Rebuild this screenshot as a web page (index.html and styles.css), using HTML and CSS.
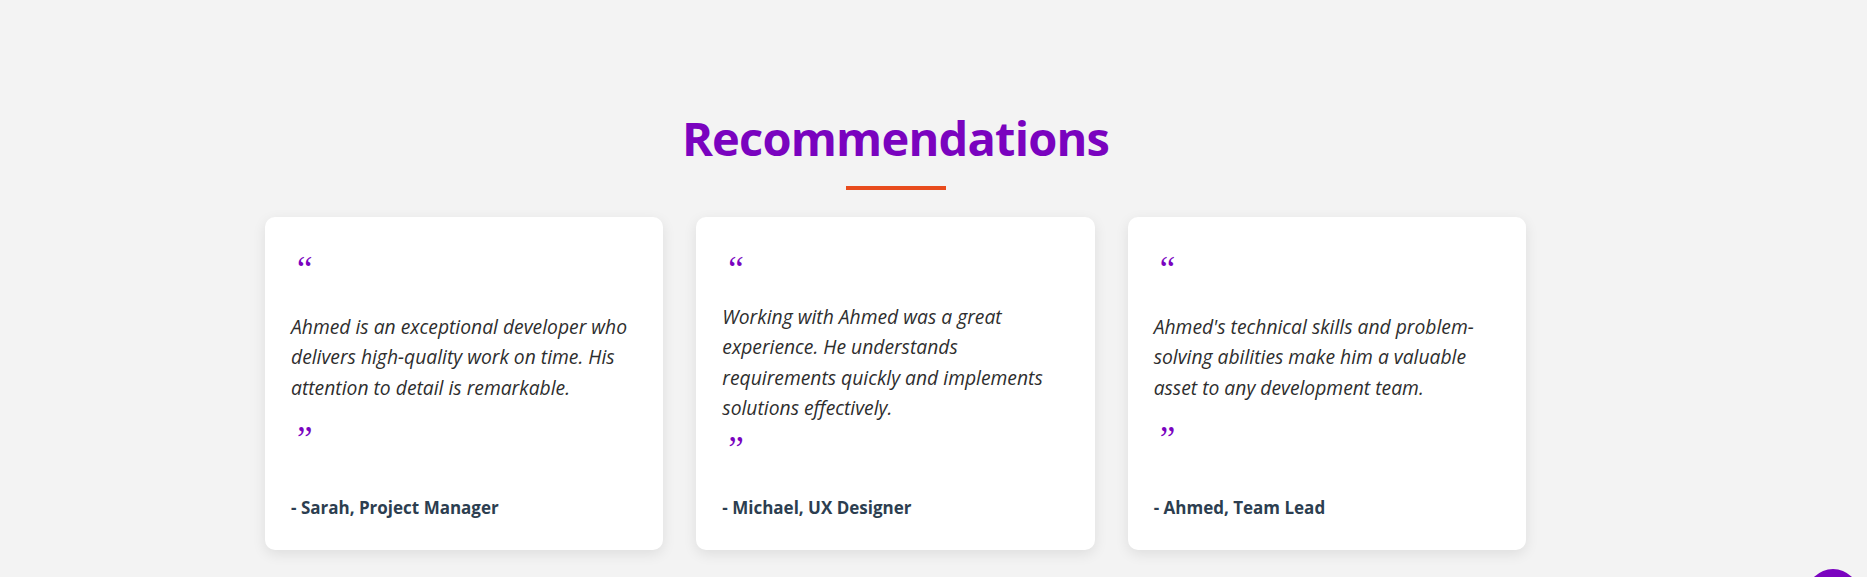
FILE: index.html
```html
<!DOCTYPE html>
<html lang="en">
<head>
<meta charset="utf-8">
<title>Recommendations</title>
<link rel="stylesheet" href="styles.css">
</head>
<body>
<section class="recommendations">
  <h2 class="section-title">Recommendations</h2>
  <div class="title-bar"></div>
  <div class="cards">
    <article class="card">
      <div class="quote-mark">&ldquo;</div>
      <p class="quote-text">Ahmed is an exceptional developer who delivers high-quality work on time. His attention to detail is remarkable.</p>
      <div class="quote-mark">&rdquo;</div>
      <p class="author">- Sarah, Project Manager</p>
    </article>
    <article class="card">
      <div class="quote-mark">&ldquo;</div>
      <p class="quote-text">Working with Ahmed was a great experience. He understands requirements quickly and implements solutions effectively.</p>
      <div class="quote-mark">&rdquo;</div>
      <p class="author">- Michael, UX Designer</p>
    </article>
    <article class="card">
      <div class="quote-mark">&ldquo;</div>
      <p class="quote-text">Ahmed's technical skills and problem-solving abilities make him a valuable asset to any development team.</p>
      <div class="quote-mark">&rdquo;</div>
      <p class="author">- Ahmed, Team Lead</p>
    </article>
  </div>
</section>
<button class="fab" aria-label="Back to top"></button>
</body>
</html>
```

FILE: styles.css
```css
html, body {
  margin: 0;
  padding: 0;
}
body {
  background: #f3f3f3;
  font-family: "Open Sans", "DejaVu Sans", sans-serif;
  color: #333;
  overflow: hidden;
  height: 577px;
}
.recommendations {
  width: 1261px;
  margin-left: 265px;
  padding-top: 102px;
  display: flex;
  flex-direction: column;
  align-items: center;
}
.section-title {
  margin: 0;
  font-size: 47px;
  letter-spacing: -0.8px;
  line-height: 72px;
  font-weight: 700;
  color: #7a03bf;
}
.title-bar {
  width: 100px;
  height: 4px;
  background: #e84b1d;
  margin-top: 12px;
}
.cards {
  align-self: stretch;
  margin-top: 27px;
  display: grid;
  grid-template-columns: repeat(3, 1fr);
  gap: 33px;
}
.card {
  background: #fff;
  border-radius: 10px;
  box-shadow: 0 4px 14px rgba(0, 0, 0, 0.09);
  padding: 25px 24px 26px 26px;
  display: flex;
  flex-direction: column;
  justify-content: space-between;
}
.quote-mark {
  font-family: "Liberation Serif", serif;
  font-size: 35px;
  line-height: 35px;
  height: 35px;
  color: #7a03bf;
  padding-left: 6px;
  margin-top: 10px;
}
.quote-text {
  margin: 14.5px 0 -2px;
  font-size: 19.3px;
  line-height: 30.6px;
  font-style: italic;
  color: #2e2e2e;
}
.author {
  margin: 26.5px 0 0;
  font-size: 17px;
  line-height: 30.6px;
  font-weight: 700;
  color: #2c3e50;
}
.fab {
  position: fixed;
  right: 8px;
  top: 569px;
  width: 52px;
  height: 52px;
  border: none;
  border-radius: 50%;
  background: #7a03bf;
  padding: 0;
}
```
